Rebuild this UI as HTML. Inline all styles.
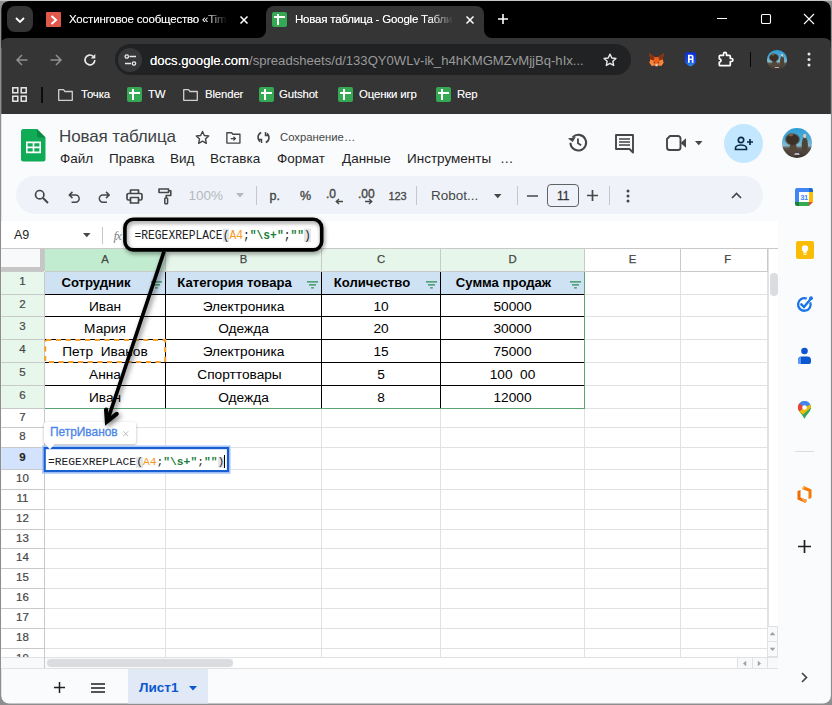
<!DOCTYPE html>
<html lang="ru">
<head>
<meta charset="utf-8">
<title>Новая таблица - Google Таблицы</title>
<style>
*{box-sizing:border-box;margin:0;padding:0}
html,body{width:832px;height:705px;overflow:hidden;background:linear-gradient(#c6c6c6 0 1px,#8e8e8e 1px)}
body{position:relative;font-family:"Liberation Sans",sans-serif;color:#1f1f1f}
#win{position:absolute;left:0;top:0;width:832px;height:705px;clip-path:inset(1px 1.100px 1.400px 1.200px round 8px);background:#f9fbfd}
.abs{position:absolute}
.t{position:absolute;white-space:nowrap;line-height:1;transform:translateY(-50%)}
svg{position:absolute;overflow:visible}
/* ---------- chrome ---------- */
#tabstrip{left:0;top:0;width:832px;height:48px;background:#000}
#chrometb{left:0;top:38px;width:832px;height:76px;background:#353535;border-radius:8px 8px 0 0}
#acttab{left:266px;top:6px;width:218px;height:33px;background:#353535;border-radius:8px 8px 0 0}
#omni{left:115px;top:43.800px;width:516px;height:31.500px;border-radius:16px;background:#212224}
.ct{color:#f2f2f2;font-size:11.5px;letter-spacing:-.2px;text-shadow:0 0 .5px rgba(255,255,255,.7)}
.bm{color:#f2f2f2;font-size:11.4px;letter-spacing:-.15px;text-shadow:0 0 .5px rgba(255,255,255,.7)}
.gic{position:absolute;width:15px;height:15px;border-radius:2px;background:#34a853}
.gic:before{content:"";position:absolute;left:2px;top:4.500px;width:11px;height:2px;background:#fff}
.gic:after{content:"";position:absolute;left:4.500px;top:2px;width:2.500px;height:11px;background:#fff}
/* ---------- sheets ---------- */
.menu{font-size:13.500px;color:#1f1f1f}
.tbtxt{font-size:12px;color:#444746}
.mono{font-family:"Liberation Mono",monospace;font-size:11.300px;color:#202124}
.pb{background:#e3e5e8}
.str{color:#188038;font-weight:bold}
.ch{font-size:11.300px;color:#444746;-webkit-text-stroke:.25px #444746;transform:translate(-50%,-50%)}
.rh{font-size:11.500px;color:#444746;-webkit-text-stroke:.2px #444746;transform:translate(-50%,-50%)}
.cell{font-size:13.700px;color:#000;transform:translate(-50%,-50%)}
</style>
</head>
<body>
<div id="win">
<!-- ======= BROWSER CHROME ======= -->
<div id="tabstrip" class="abs"></div>
<div id="chrometb" class="abs"></div>
<div id="acttab" class="abs"></div>
<!-- tab outward curves -->
<svg style="left:258px;top:30px" width="8" height="8"><path d="M8 0V8H0A8 8 0 0 0 8 0Z" fill="#353535"/></svg>
<svg style="left:484px;top:30px" width="8" height="8"><path d="M0 0V8H8A8 8 0 0 1 0 0Z" fill="#353535"/></svg>
<!-- tab search button -->
<div class="abs" style="left:7px;top:6px;width:26px;height:26px;border-radius:8px;background:#353535"></div>
<svg style="left:15px;top:16.600px" width="10" height="6"><path d="M1 1L5 5L9 1" fill="none" stroke="#fff" stroke-width="1.8"/></svg>
<!-- tab 1 -->
<div class="abs" style="left:46px;top:11.600px;width:15px;height:15px;background:#e0584b;border-radius:1px"></div>
<svg style="left:50px;top:14.600px" width="8" height="10"><path d="M1.5 1L6 5L1.5 9" fill="none" stroke="#fff" stroke-width="2"/></svg>
<span id="tab1" class="t ct" style="left:69px;top:20.200px;width:160px;overflow:hidden;-webkit-mask-image:linear-gradient(90deg,#000 84%,transparent 99%)">Хостинговое сообщество «Timeweb»</span>
<svg style="left:239.500px;top:15.500px" width="8" height="8"><path d="M.5 .5L7.500 7.500M7.500 .5L.5 7.500" stroke="#fff" stroke-width="1.500"/></svg>
<!-- tab 2 -->
<div class="gic" style="left:272px;top:11.500px"></div>
<span id="tab2" class="t ct" style="left:295px;top:20.200px;width:160px;overflow:hidden;color:#fff;-webkit-mask-image:linear-gradient(90deg,#000 84%,transparent 99%)">Новая таблица - Google Таблицы</span>
<svg style="left:465.500px;top:15.500px" width="8" height="8"><path d="M.5 .5L7.500 7.500M7.500 .5L.5 7.500" stroke="#fff" stroke-width="1.500"/></svg>
<!-- new tab + -->
<svg style="left:498px;top:14px" width="10" height="10"><path d="M5 0V10M0 5H10" stroke="#fff" stroke-width="1.6"/></svg>
<!-- window controls -->
<svg style="left:717px;top:18px" width="10" height="1"><path d="M0 .5H10" stroke="#fff" stroke-width="1"/></svg>
<svg style="left:761px;top:14px" width="10" height="10"><rect x=".5" y=".5" width="9" height="9" rx="1.2" fill="none" stroke="#fff" stroke-width="1.1"/></svg>
<svg style="left:804px;top:14px" width="10" height="10"><path d="M0 0L10 10M10 0L0 10" stroke="#fff" stroke-width="1.1"/></svg>
<!-- nav buttons -->
<svg style="left:16px;top:54px" width="12" height="12"><path d="M11.5 6H1.5M6 1L1 6L6 11" fill="none" stroke="#909090" stroke-width="1.5"/></svg>
<svg style="left:50px;top:54px" width="12" height="12"><path d="M.5 6H10.5M6 1L11 6L6 11" fill="none" stroke="#909090" stroke-width="1.5"/></svg>
<svg style="left:83px;top:53px" width="14" height="14"><path d="M11.8 7A4.9 4.9 0 1 1 10.2 3.3" fill="none" stroke="#e8e8e8" stroke-width="1.7"/><path d="M12.3 1V5.6H7.7Z" fill="#e8e8e8"/></svg>
<div id="omni" class="abs"></div>
<div class="abs" style="left:118px;top:48px;width:24px;height:24px;border-radius:12px;background:#37383a"></div>
<svg style="left:124px;top:54px" width="13" height="12"><path d="M5.5 2.5H12M1 9.5H7" stroke="#e8e8e8" stroke-width="1.4"/><circle cx="2.8" cy="2.5" r="1.7" fill="none" stroke="#e8e8e8" stroke-width="1.3"/><circle cx="10" cy="9.5" r="1.7" fill="none" stroke="#e8e8e8" stroke-width="1.3"/></svg>
<span id="url" class="t" style="left:150px;top:60.600px;font-size:13.1px;color:#fff"><span style="text-shadow:0 0 .3px rgba(255,255,255,.8)">docs.google.com</span><span id="url2" style="color:#9a9a9a">/spreadsheets/d/133QY0WLv-ik_h4hKMGMZvMjjBq-hIx...</span></span>
<svg style="left:602px;top:52px" width="16" height="16" viewBox="0 0 24 24"><path d="M12 3.2l2.7 5.7 6.2.8-4.6 4.3 1.2 6.2L12 17.1l-5.5 3.1 1.2-6.2L3.1 9.700l6.2-.8z" fill="none" stroke="#e8e8e8" stroke-width="2.1" stroke-linejoin="round"/></svg>
<!-- extension icons -->
<svg id="fox" style="left:649.200px;top:53px" width="15" height="14" viewBox="0 0 16 14"><path d="M.3 0L6 3.800H10L15.700 0L14.600 6.500L15.500 10L13 13.300L9.800 12.500L9 13.600H7L6.200 12.500L3 13.300L.5 10L1.400 6.500Z" fill="#e85f1c"/><path d="M.3 0L6 3.800L4.800 7.800L1.400 6.500ZM15.700 0L10 3.800L11.200 7.800L14.600 6.500Z" fill="#8e300e"/><path d="M1.400 6.500L4.800 7.800L6.200 12.500L3 13.300L.5 10ZM14.600 6.500L11.200 7.800L9.800 12.500L13 13.300L15.500 10Z" fill="#f5873a"/><path d="M6.600 11H9.400L9 13.600H7Z" fill="#d9d2ca"/><path d="M4.600 9L6.300 9.600L5.900 10.600ZM11.400 9L9.700 9.600L10.100 10.600Z" fill="#2b1a12"/></svg>
<svg style="left:685.400px;top:52.300px" width="11" height="14.600" viewBox="0 0 11 14.500"><defs><linearGradient id="shg" x1="0" y1="0" x2="0" y2="1"><stop offset="0" stop-color="#0a2fd6"/><stop offset=".6" stop-color="#1247e6"/><stop offset="1" stop-color="#2a9cf2"/></linearGradient></defs><path d="M0 .8L5.500 0L11 .8V9C11 11.500 7.500 13.500 5.500 14.500C3.500 13.500 0 11.500 0 9Z" fill="url(#shg)"/><path d="M3 2.600H6.600A1.900 1.900 0 0 1 8.500 4.500V10.600H6.800V8H4.700V10.600H3ZM4.700 4.100V6.400H6.800V4.500A.4.400 0 0 0 6.400 4.100Z" fill="#fff" fill-rule="evenodd"/></svg>
<svg style="left:716px;top:50px" width="20" height="18" viewBox="0 0 20 18"><path d="M4.300 5.300H7.500V3.900A1.500 1.500 0 1 1 10.500 3.900V5.300H13.300A1 1 0 0 1 14.300 6.300V8.500H15.400A1.500 1.500 0 1 1 15.400 11.500H14.300V14.700A1 1 0 0 1 13.300 15.700H4.300A1 1 0 0 1 3.300 14.700V12.200A1.700 1.700 0 1 0 3.300 8.800V6.300A1 1 0 0 1 4.300 5.300Z" fill="none" stroke="#fff" stroke-width="1.700" stroke-linejoin="round"/></svg>
<div class="abs" style="left:749.500px;top:52px;width:1.500px;height:15px;background:#060606"></div>
<div id="av1" class="abs" style="left:767px;top:50px;width:19.500px;height:19.500px;border-radius:50%;background:radial-gradient(ellipse 10% 4% at 50% 87%,#aab6c8 0 80%,transparent 100%),radial-gradient(ellipse 6% 8% at 76% 26%,#cfc8b8 0 80%,transparent 100%),radial-gradient(ellipse 8% 7% at 30% 22%,#7a6244 0 70%,transparent 100%),radial-gradient(ellipse 27% 22% at 35% 38%,#3c2f25 0 72%,transparent 100%),radial-gradient(ellipse 14% 28% at 37% 70%,#55463a 0 72%,transparent 100%),radial-gradient(ellipse 12% 32% at 76% 58%,#4d4438 0 72%,transparent 100%),linear-gradient(#2e9ed6 0,#4aa9d6 32%,#86b9cf 58%,#5a5148 68%,#3a302a 100%)"></div>
<svg style="left:807px;top:52px" width="4" height="15"><circle cx="2" cy="2" r="1.500" fill="#e8e8e8"/><circle cx="2" cy="7.500" r="1.500" fill="#e8e8e8"/><circle cx="2" cy="13" r="1.500" fill="#e8e8e8"/></svg>
<!-- bookmarks bar -->
<svg style="left:12px;top:87px" width="15" height="15"><g fill="none" stroke="#e8e8e8" stroke-width="1.500"><rect x=".8" y=".8" width="5" height="5"/><rect x="9.200" y=".8" width="5" height="5"/><rect x=".8" y="9.200" width="5" height="5"/><rect x="9.200" y="9.200" width="5" height="5"/></g></svg>
<div class="abs" style="left:41px;top:87px;width:2px;height:16px;background:#0c0c0c"></div>
<svg class="fold" style="left:58px;top:89px" width="15" height="12"><path d="M.7.700H5.500L7 2.500H14.300V11.300H.7Z" fill="none" stroke="#d0d0d0" stroke-width="1.300" stroke-linejoin="round"/></svg>
<span id="bm1" class="t bm" style="left:81px;top:95px">Точка</span>
<div class="gic" style="left:127px;top:87px"></div>
<span id="bm2" class="t bm" style="left:148px;top:95px">TW</span>
<svg class="fold" style="left:183px;top:89px" width="15" height="12"><path d="M.7.700H5.500L7 2.500H14.300V11.300H.7Z" fill="none" stroke="#d0d0d0" stroke-width="1.300" stroke-linejoin="round"/></svg>
<span id="bm3" class="t bm" style="left:205px;top:95px">Blender</span>
<div class="gic" style="left:259px;top:87px"></div>
<span id="bm4" class="t bm" style="left:279px;top:95px">Gutshot</span>
<div class="gic" style="left:338px;top:87px"></div>
<span id="bm5" class="t bm" style="left:359px;top:95px">Оценки игр</span>
<div class="gic" style="left:436px;top:87px"></div>
<span id="bm6" class="t bm" style="left:457px;top:95px">Rep</span>
<!-- ======= SHEETS APP ======= -->

<!-- doc header -->
<svg style="left:21px;top:129.400px" width="24.500" height="32.500" viewBox="0 0 24.500 32.500"><path d="M2.500 0H16L24.500 8.500V30A2.500 2.500 0 0 1 22 32.500H2.500A2.500 2.500 0 0 1 0 30V2.500A2.500 2.500 0 0 1 2.500 0Z" fill="#10ab57"/><path d="M16 0L24.500 8.500H18A2 2 0 0 1 16 6.500Z" fill="#0b8a45"/><path d="M5 12.600H20V24.200H5ZM6.600 14.200V17.600H11.700V14.200ZM13.300 14.200V17.600H18.400V14.200ZM6.600 19.200V22.600H11.700V19.200ZM13.300 19.200V22.600H18.400V19.200Z" fill="#fff" fill-rule="evenodd"/></svg>
<span id="title" class="t" style="left:59px;top:136.200px;font-size:17px;letter-spacing:-.13px;color:#3f4245">Новая таблица</span>
<svg style="left:194px;top:129px" width="17" height="17" viewBox="0 0 24 24"><path d="M12 3.500l2.600 5.600 6.100.8-4.500 4.200 1.200 6.100L12 17.200l-5.400 3 1.200-6.100-4.500-4.200 6.100-.8z" fill="none" stroke="#444746" stroke-width="2" stroke-linejoin="round"/></svg>
<svg style="left:225.500px;top:131.500px" width="14.800" height="11.800" viewBox="0 0 16 13"><path d="M.8.800H6L7.500 2.500H15.200V12.200H.8Z" fill="none" stroke="#444746" stroke-width="1.500" stroke-linejoin="round"/><path d="M5 7.300H9.500M8 5.300L10.200 7.300L8 9.300" fill="none" stroke="#444746" stroke-width="1.400"/></svg>
<svg style="left:257px;top:131px" width="13" height="13" viewBox="0 0 13 13"><path d="M4.200 1.500A5.200 5.200 0 0 0 3.200 10.500M8.800 11.500A5.200 5.200 0 0 0 9.800 2.500" fill="none" stroke="#444746" stroke-width="1.600"/><path d="M1 8.500H4.500V12M12 4.500H8.500V1" fill="none" stroke="#444746" stroke-width="1.500"/></svg>
<span id="saving" class="t" style="left:280px;top:137.500px;font-size:11.300px;color:#444746">Сохранение…</span>
<span id="m1" class="t menu" style="left:60px;top:158.500px">Файл</span>
<span id="m2" class="t menu" style="left:109px;top:158.500px">Правка</span>
<span id="m3" class="t menu" style="left:170px;top:158.500px">Вид</span>
<span id="m4" class="t menu" style="left:210px;top:158.500px">Вставка</span>
<span id="m5" class="t menu" style="left:277px;top:158.500px">Формат</span>
<span id="m6" class="t menu" style="left:342px;top:158.500px">Данные</span>
<span id="m7" class="t menu" style="left:407px;top:158.500px">Инструменты</span>
<span id="m8" class="t menu" style="left:500px;top:158.500px">…</span>
<!-- right header icons -->
<svg style="left:566.500px;top:132.200px" width="21.500" height="21.500" viewBox="0 0 20 20"><path d="M3.200 10A7.300 7.300 0 1 0 5.300 4.800" fill="none" stroke="#444746" stroke-width="1.900"/><path d="M1 5.500L5 9.500L8.500 5.200Z" fill="#444746" transform="rotate(-8 4 7)"/><path d="M10.200 6V10.500L13.200 12.300" fill="none" stroke="#444746" stroke-width="1.700"/></svg>
<svg style="left:615px;top:134px" width="19" height="19" viewBox="0 0 19 19"><path d="M1 1H18V18.500L14.500 15H1Z" fill="none" stroke="#444746" stroke-width="1.900" stroke-linejoin="round"/><path d="M4 5H15M4 8H15M4 11H15" stroke="#444746" stroke-width="1.500"/></svg>
<svg style="left:666px;top:135px" width="21" height="16" viewBox="0 0 21 16"><path d="M4 1H12A2.500 2.500 0 0 1 14.500 3.500V12.500A2.500 2.500 0 0 1 12 15H3.500A2.500 2.500 0 0 1 1 12.500V4Z" fill="none" stroke="#444746" stroke-width="1.900" stroke-linejoin="round"/><path d="M14.500 8L20 3.200V12.800Z" fill="#444746"/></svg>
<svg style="left:695px;top:141px" width="7.500" height="4.500"><path d="M0 0H7.500L3.750 4.200Z" fill="#444746"/></svg>
<div class="abs" style="left:724px;top:124px;width:39px;height:39px;border-radius:50%;background:#c2e7ff"></div>
<svg style="left:734px;top:136px" width="20" height="15" viewBox="0 0 20 15"><circle cx="7" cy="4" r="2.700" fill="none" stroke="#0a2a4a" stroke-width="1.700"/><path d="M1.500 13.500V12C1.500 9.800 5 9 7 9S12.500 9.800 12.500 12V13.500Z" fill="none" stroke="#0a2a4a" stroke-width="1.700" stroke-linejoin="round"/><path d="M16 3V9M13 6H19" stroke="#0a2a4a" stroke-width="1.700"/></svg>
<div id="av2" class="abs" style="left:782px;top:127.600px;width:30.400px;height:30.400px;border-radius:50%;background:radial-gradient(ellipse 10% 4% at 50% 87%,#aab6c8 0 80%,transparent 100%),radial-gradient(ellipse 6% 8% at 76% 26%,#cfc8b8 0 80%,transparent 100%),radial-gradient(ellipse 8% 7% at 30% 22%,#7a6244 0 70%,transparent 100%),radial-gradient(ellipse 27% 22% at 35% 38%,#3c2f25 0 72%,transparent 100%),radial-gradient(ellipse 14% 28% at 37% 70%,#55463a 0 72%,transparent 100%),radial-gradient(ellipse 12% 32% at 76% 58%,#4d4438 0 72%,transparent 100%),linear-gradient(#2e9ed6 0,#4aa9d6 32%,#86b9cf 58%,#5a5148 68%,#3a302a 100%)"></div>
<!-- toolbar pill -->
<div class="abs" style="left:16px;top:176px;width:747px;height:38px;border-radius:19px;background:#eff3f9"></div>
<svg style="left:34px;top:188.700px" width="15" height="15" viewBox="0 0 15 15"><circle cx="5.700" cy="5.700" r="4.200" fill="none" stroke="#444746" stroke-width="1.700"/><path d="M9 9L14 14" stroke="#444746" stroke-width="1.900"/></svg>
<svg style="left:68px;top:190.700px" width="12.500" height="12.500" viewBox="0 0 14 14"><path d="M5 1L1.500 4.500L5 8M1.500 4.500H8.500A4 4 0 0 1 8.500 12.500H4" fill="none" stroke="#444746" stroke-width="1.700"/></svg>
<svg style="left:98px;top:190.700px" width="12.500" height="12.500" viewBox="0 0 14 14"><path d="M9 1L12.500 4.500L9 8M12.500 4.500H5.500A4 4 0 0 0 5.500 12.500H10" fill="none" stroke="#444746" stroke-width="1.700"/></svg>
<svg style="left:126px;top:188.700px" width="17" height="15" viewBox="0 0 17 15"><path d="M4.500 4.500V1H12.500V4.500M4.500 11H2.500A1.500 1.500 0 0 1 1 9.500V6A1.500 1.500 0 0 1 2.500 4.500H14.500A1.500 1.500 0 0 1 16 6V9.500A1.500 1.500 0 0 1 14.500 11H12.500M4.500 8.500H12.500V14H4.500Z" fill="none" stroke="#444746" stroke-width="1.700" stroke-linejoin="round"/></svg>
<svg style="left:157.500px;top:188px" width="14" height="17" viewBox="0 0 14 17"><path d="M1 1H10.500V4.500H1ZM10.500 2.800H12.800V7.500H8.200V10" fill="none" stroke="#444746" stroke-width="1.600" stroke-linejoin="round"/><rect x="6.800" y="10" width="2.800" height="5.800" rx=".8" fill="none" stroke="#444746" stroke-width="1.500"/></svg>
<span id="zoom" class="t" style="left:188.500px;top:196px;font-size:13.500px;color:#b4b8bd">100%</span>
<svg style="left:236px;top:193px" width="8" height="5"><path d="M0 0H8L4 4.500Z" fill="#b4b8bd"/></svg>
<div class="abs" style="left:256px;top:186px;width:1px;height:19px;background:#c7c7c7"></div>
<span id="cur" class="t tbtxt" style="left:269.500px;top:196px;font-size:12.500px;-webkit-text-stroke:.35px #444746">р.</span>
<span id="pct" class="t tbtxt" style="left:300px;top:196px;font-size:12.500px;-webkit-text-stroke:.35px #444746">%</span>
<span id="dec0" class="t tbtxt" style="left:326px;top:194px;font-size:12px;-webkit-text-stroke:.4px #444746">.0</span>
<svg style="left:335px;top:198px" width="8" height="7"><path d="M8 3.500H1.500M4 1L1.200 3.500L4 6" fill="none" stroke="#444746" stroke-width="1.300"/></svg>
<span id="dec00" class="t tbtxt" style="left:358px;top:194px;font-size:12px;-webkit-text-stroke:.4px #444746">.00</span>
<svg style="left:365px;top:198px" width="8" height="7"><path d="M0 3.500H6.500M4 1L6.800 3.500L4 6" fill="none" stroke="#444746" stroke-width="1.300"/></svg>
<span id="n123" class="t tbtxt" style="left:388.500px;top:196px;font-size:11px;-webkit-text-stroke:.3px #444746;letter-spacing:-.1px">123</span>
<div class="abs" style="left:416px;top:186px;width:1px;height:19px;background:#c7c7c7"></div>
<span id="font" class="t tbtxt" style="left:431px;top:196px;font-size:13.500px">Robot...</span>
<svg style="left:494.200px;top:193.500px" width="7.500" height="4.500"><path d="M0 0H7.500L3.750 4.200Z" fill="#444746"/></svg>
<div class="abs" style="left:517px;top:186px;width:1px;height:19px;background:#c7c7c7"></div>
<svg style="left:527px;top:195px" width="11" height="2"><path d="M0 1H11" stroke="#444746" stroke-width="1.700"/></svg>
<div class="abs" style="left:547px;top:184px;width:32px;height:23px;border:1px solid #5f6368;border-radius:4px"></div>
<span id="fs" class="t tbtxt" style="left:557px;top:196px;font-size:12px;-webkit-text-stroke:.3px #333;color:#333">11</span>
<svg style="left:587px;top:190px" width="11" height="11"><path d="M5.500 0V11M0 5.500H11" stroke="#444746" stroke-width="1.700"/></svg>
<div class="abs" style="left:609px;top:186px;width:1px;height:19px;background:#c7c7c7"></div>
<svg style="left:626px;top:189px" width="4" height="14"><circle cx="2" cy="2" r="1.500" fill="#444746"/><circle cx="2" cy="7" r="1.500" fill="#444746"/><circle cx="2" cy="12" r="1.500" fill="#444746"/></svg>
<svg style="left:731px;top:192px" width="11" height="7"><path d="M1 6L5.500 1.500L10 6" fill="none" stroke="#444746" stroke-width="1.700"/></svg>
<!-- formula bar -->
<div class="abs" style="left:1px;top:221px;width:777px;height:28px;background:#fff"></div>
<span id="cellref" class="t" style="left:14px;top:235px;font-size:12.500px;color:#1f1f1f">A9</span>
<svg style="left:82.500px;top:233px" width="7.500" height="4.500"><path d="M0 0H7.500L3.750 4.200Z" fill="#444746"/></svg>
<div class="abs" style="left:102px;top:227px;width:1px;height:17px;background:#c7c7c7"></div>
<span class="t" style="left:113.500px;top:235px;font-size:13px;font-style:italic;font-family:'Liberation Serif',serif;color:#80868b;letter-spacing:-1px">fx</span>
<!--GRID-START-->
<div class="abs" style="left:1px;top:248px;width:777px;height:421px;background:#fff"></div>
<div class="abs" style="left:1px;top:248px;width:777px;height:1px;background:#c9c9c9"></div>
<div class="abs" style="left:1px;top:249px;width:39px;height:18px;background:#f8f9fa"></div>
<div class="abs" style="left:40px;top:249px;width:4px;height:23px;background:#c6c6c6"></div>
<div class="abs" style="left:1px;top:267px;width:43px;height:5px;background:#c6c6c6"></div>
<div class="abs" style="left:45px;top:249px;width:120px;height:22px;background:#c2ecd0"></div>
<div class="abs" style="left:166px;top:249px;width:418px;height:22px;background:#e6f6ea"></div>
<div class="abs" style="left:1px;top:272px;width:43px;height:136px;background:#e8f7ec"></div>
<div class="abs" style="left:1px;top:448px;width:43px;height:21px;background:#d3e3fd"></div>
<div class="abs" style="left:45px;top:272px;width:539px;height:22px;background:#cfe2f3"></div>
<div class="abs" style="left:1px;top:271px;width:43px;height:1px;background:#c9c9c9"></div>
<div class="abs" style="left:45px;top:271px;width:723px;height:1px;background:#c9c9c9"></div>
<div class="abs" style="left:1px;top:294px;width:43px;height:1px;background:#c9c9c9"></div>
<div class="abs" style="left:45px;top:294px;width:723px;height:1px;background:#e1e1e1"></div>
<div class="abs" style="left:1px;top:316px;width:43px;height:1px;background:#c9c9c9"></div>
<div class="abs" style="left:45px;top:316px;width:723px;height:1px;background:#e1e1e1"></div>
<div class="abs" style="left:1px;top:339px;width:43px;height:1px;background:#c9c9c9"></div>
<div class="abs" style="left:45px;top:339px;width:723px;height:1px;background:#e1e1e1"></div>
<div class="abs" style="left:1px;top:362px;width:43px;height:1px;background:#c9c9c9"></div>
<div class="abs" style="left:45px;top:362px;width:723px;height:1px;background:#e1e1e1"></div>
<div class="abs" style="left:1px;top:385px;width:43px;height:1px;background:#c9c9c9"></div>
<div class="abs" style="left:45px;top:385px;width:723px;height:1px;background:#e1e1e1"></div>
<div class="abs" style="left:1px;top:408px;width:43px;height:1px;background:#c9c9c9"></div>
<div class="abs" style="left:45px;top:408px;width:723px;height:1px;background:#e1e1e1"></div>
<div class="abs" style="left:1px;top:427px;width:43px;height:1px;background:#c9c9c9"></div>
<div class="abs" style="left:45px;top:427px;width:723px;height:1px;background:#e1e1e1"></div>
<div class="abs" style="left:1px;top:447px;width:43px;height:1px;background:#c9c9c9"></div>
<div class="abs" style="left:45px;top:447px;width:723px;height:1px;background:#e1e1e1"></div>
<div class="abs" style="left:1px;top:469px;width:43px;height:1px;background:#c9c9c9"></div>
<div class="abs" style="left:45px;top:469px;width:723px;height:1px;background:#e1e1e1"></div>
<div class="abs" style="left:1px;top:489px;width:43px;height:1px;background:#c9c9c9"></div>
<div class="abs" style="left:45px;top:489px;width:723px;height:1px;background:#e1e1e1"></div>
<div class="abs" style="left:1px;top:509px;width:43px;height:1px;background:#c9c9c9"></div>
<div class="abs" style="left:45px;top:509px;width:723px;height:1px;background:#e1e1e1"></div>
<div class="abs" style="left:1px;top:529px;width:43px;height:1px;background:#c9c9c9"></div>
<div class="abs" style="left:45px;top:529px;width:723px;height:1px;background:#e1e1e1"></div>
<div class="abs" style="left:1px;top:548px;width:43px;height:1px;background:#c9c9c9"></div>
<div class="abs" style="left:45px;top:548px;width:723px;height:1px;background:#e1e1e1"></div>
<div class="abs" style="left:1px;top:568px;width:43px;height:1px;background:#c9c9c9"></div>
<div class="abs" style="left:45px;top:568px;width:723px;height:1px;background:#e1e1e1"></div>
<div class="abs" style="left:1px;top:588px;width:43px;height:1px;background:#c9c9c9"></div>
<div class="abs" style="left:45px;top:588px;width:723px;height:1px;background:#e1e1e1"></div>
<div class="abs" style="left:1px;top:608px;width:43px;height:1px;background:#c9c9c9"></div>
<div class="abs" style="left:45px;top:608px;width:723px;height:1px;background:#e1e1e1"></div>
<div class="abs" style="left:1px;top:628px;width:43px;height:1px;background:#c9c9c9"></div>
<div class="abs" style="left:45px;top:628px;width:723px;height:1px;background:#e1e1e1"></div>
<div class="abs" style="left:1px;top:648px;width:43px;height:1px;background:#c9c9c9"></div>
<div class="abs" style="left:45px;top:648px;width:723px;height:1px;background:#e1e1e1"></div>
<div class="abs" style="left:44px;top:249px;width:1px;height:22px;background:#c9c9c9"></div>
<div class="abs" style="left:44px;top:272px;width:1px;height:385px;background:#c9c9c9"></div>
<div class="abs" style="left:165px;top:249px;width:1px;height:22px;background:#c9c9c9"></div>
<div class="abs" style="left:165px;top:272px;width:1px;height:385px;background:#e1e1e1"></div>
<div class="abs" style="left:321px;top:249px;width:1px;height:22px;background:#c9c9c9"></div>
<div class="abs" style="left:321px;top:272px;width:1px;height:385px;background:#e1e1e1"></div>
<div class="abs" style="left:440px;top:249px;width:1px;height:22px;background:#c9c9c9"></div>
<div class="abs" style="left:440px;top:272px;width:1px;height:385px;background:#e1e1e1"></div>
<div class="abs" style="left:584px;top:249px;width:1px;height:22px;background:#c9c9c9"></div>
<div class="abs" style="left:584px;top:272px;width:1px;height:385px;background:#e1e1e1"></div>
<div class="abs" style="left:680px;top:249px;width:1px;height:22px;background:#c9c9c9"></div>
<div class="abs" style="left:680px;top:272px;width:1px;height:385px;background:#e1e1e1"></div>
<div class="abs" style="left:767px;top:249px;width:1px;height:22px;background:#c9c9c9"></div>
<div class="abs" style="left:767px;top:272px;width:1px;height:385px;background:#e1e1e1"></div>
<div class="abs" style="left:45px;top:294px;width:540px;height:1px;background:#000"></div>
<div class="abs" style="left:45px;top:316px;width:540px;height:1px;background:#000"></div>
<div class="abs" style="left:45px;top:339px;width:540px;height:1px;background:#000"></div>
<div class="abs" style="left:45px;top:362px;width:540px;height:1px;background:#000"></div>
<div class="abs" style="left:45px;top:385px;width:540px;height:1px;background:#000"></div>
<div class="abs" style="left:165px;top:272px;width:1px;height:136px;background:#000"></div>
<div class="abs" style="left:321px;top:272px;width:1px;height:136px;background:#000"></div>
<div class="abs" style="left:440px;top:272px;width:1px;height:136px;background:#000"></div>
<div class="abs" style="left:584px;top:272px;width:1px;height:137px;background:#5aa575"></div>
<div class="abs" style="left:45px;top:408px;width:540px;height:1px;background:#5aa575"></div>
<span class="t ch" style="left:105.0px;top:260px">A</span>
<span class="t ch" style="left:243.5px;top:260px">B</span>
<span class="t ch" style="left:381.0px;top:260px">C</span>
<span class="t ch" style="left:512.5px;top:260px">D</span>
<span class="t ch" style="left:632.5px;top:260px">E</span>
<span class="t ch" style="left:727.8px;top:260px">F</span>
<span class="t rh" style="left:22.500px;top:282.4px">1</span>
<span class="t rh" style="left:22.500px;top:304.9px">2</span>
<span class="t rh" style="left:22.500px;top:327.4px">3</span>
<span class="t rh" style="left:22.500px;top:350.4px">4</span>
<span class="t rh" style="left:22.500px;top:373.4px">5</span>
<span class="t rh" style="left:22.500px;top:396.4px">6</span>
<span class="t rh" style="left:22.500px;top:417.7px">7</span>
<span class="t rh" style="left:22.500px;top:437.2px">8</span>
<span class="t rh" style="left:22.500px;top:458.2px;font-weight:bold;color:#1f1f1f">9</span>
<span class="t rh" style="left:22.500px;top:479.2px">10</span>
<span class="t rh" style="left:22.500px;top:499.2px">11</span>
<span class="t rh" style="left:22.500px;top:519.2px">12</span>
<span class="t rh" style="left:22.500px;top:538.7px">13</span>
<span class="t rh" style="left:22.500px;top:558.2px">14</span>
<span class="t rh" style="left:22.500px;top:578.2px">15</span>
<span class="t rh" style="left:22.500px;top:598.2px">16</span>
<span class="t rh" style="left:22.500px;top:618.2px">17</span>
<span class="t rh" style="left:22.500px;top:638.2px">18</span>
<span class="t rh" style="left:22.500px;top:659px;clip-path:inset(0 0 5.500px 0)">19</span>
<span id="h0" class="t cell" style="left:96px;top:283.300px;font-weight:bold;font-size:13.100px;color:#000">Сотрудник</span>
<svg style="left:150.5px;top:281px" width="11" height="8"><path d="M0 .8H11M2 3.800H9M4.200 6.800H6.800" stroke="#2d8a52" stroke-width="1.200"/></svg>
<span id="h1" class="t cell" style="left:234.5px;top:283.300px;font-weight:bold;font-size:13.100px;color:#000">Категория товара</span>
<svg style="left:306.5px;top:281px" width="11" height="8"><path d="M0 .8H11M2 3.800H9M4.200 6.800H6.800" stroke="#2d8a52" stroke-width="1.200"/></svg>
<span id="h2" class="t cell" style="left:372px;top:283.300px;font-weight:bold;font-size:13.100px;color:#000">Количество</span>
<svg style="left:425.5px;top:281px" width="11" height="8"><path d="M0 .8H11M2 3.800H9M4.200 6.800H6.800" stroke="#2d8a52" stroke-width="1.200"/></svg>
<span id="h3" class="t cell" style="left:503.5px;top:283.300px;font-weight:bold;font-size:13.100px;color:#000">Сумма продаж</span>
<svg style="left:569.5px;top:281px" width="11" height="8"><path d="M0 .8H11M2 3.800H9M4.200 6.800H6.800" stroke="#2d8a52" stroke-width="1.200"/></svg>
<span id="d00" class="t cell" style="left:105.0px;top:306.5px">Иван</span>
<span id="d01" class="t cell" style="left:243.5px;top:306.5px">Электроника</span>
<span id="d02" class="t cell" style="left:381.0px;top:306.5px">10</span>
<span id="d03" class="t cell" style="left:512.5px;top:306.5px">50000</span>
<span id="d10" class="t cell" style="left:105.0px;top:329.0px">Мария</span>
<span id="d11" class="t cell" style="left:243.5px;top:329.0px">Одежда</span>
<span id="d12" class="t cell" style="left:381.0px;top:329.0px">20</span>
<span id="d13" class="t cell" style="left:512.5px;top:329.0px">30000</span>
<span id="d20" class="t cell" style="left:105.0px;top:351.5px">Петр  Иванов</span>
<span id="d21" class="t cell" style="left:243.5px;top:351.5px">Электроника</span>
<span id="d22" class="t cell" style="left:381.0px;top:351.5px">15</span>
<span id="d23" class="t cell" style="left:512.5px;top:351.5px">75000</span>
<span id="d30" class="t cell" style="left:105.0px;top:374.5px">Анна</span>
<span id="d31" class="t cell" style="left:239.5px;top:374.5px">Спорттовары</span>
<span id="d32" class="t cell" style="left:381.0px;top:374.5px">5</span>
<span id="d33" class="t cell" style="left:512.5px;top:374.5px">100  00</span>
<span id="d40" class="t cell" style="left:105.0px;top:397.5px">Иван</span>
<span id="d41" class="t cell" style="left:243.5px;top:397.5px">Одежда</span>
<span id="d42" class="t cell" style="left:381.0px;top:397.5px">8</span>
<span id="d43" class="t cell" style="left:512.5px;top:397.5px">12000</span>
<svg style="left:0;top:0" width="200" height="400"><rect x="45.200" y="340" width="120" height="22" fill="none" stroke="#f6a02c" stroke-width="2.100" stroke-dasharray="5.200 4.500" stroke-dashoffset="-1"/></svg>
<div class="abs" style="left:768px;top:249px;width:10px;height:408px;background:#fff;border-left:1px solid #e1e1e1"></div>
<div class="abs" style="left:770px;top:273px;width:8px;height:23px;border-radius:4px;background:#dadce0"></div>
<div class="abs" style="left:767px;top:626px;width:11px;height:31px;background:#f8f9fa;border:1px solid #e1e1e1"></div>
<div class="abs" style="left:767px;top:641px;width:11px;height:1px;background:#e1e1e1"></div>
<svg style="left:769px;top:631px" width="7" height="5"><path d="M.7 4.200H6.300L3.500 1Z" fill="#9aa0a6"/></svg>
<svg style="left:769px;top:647px" width="7" height="5"><path d="M.7 .8H6.300L3.500 4Z" fill="#9aa0a6"/></svg>
<div class="abs" style="left:1px;top:657px;width:777px;height:12px;background:#f8f9fa;border-top:1px solid #e1e1e1"></div>
<div class="abs" style="left:44px;top:657px;width:1px;height:12px;background:#c9c9c9"></div>
<div class="abs" style="left:47px;top:659px;width:186px;height:8px;border-radius:4px;background:#dadce0"></div>
<div class="abs" style="left:233px;top:658px;width:504px;height:11px;background:#fff"></div>
<div class="abs" style="left:737px;top:657px;width:31px;height:12px;background:#f8f9fa;border:1px solid #e1e1e1;border-bottom:0"></div>
<div class="abs" style="left:752px;top:657px;width:1px;height:12px;background:#e1e1e1"></div>
<svg style="left:742px;top:660px" width="5" height="7"><path d="M4.200 .7V6.300L1 3.500Z" fill="#9aa0a6"/></svg>
<svg style="left:757px;top:660px" width="5" height="7"><path d="M.8 .7V6.300L4 3.500Z" fill="#9aa0a6"/></svg>
<div class="abs" style="left:1px;top:668px;width:777px;height:1px;background:#e1e1e1"></div>
<!--GRID-END-->

<!-- side panel icons -->
<svg style="left:795px;top:188px" width="18" height="18" viewBox="0 0 18 18"><rect x="0" y="0" width="18" height="18" rx="2" fill="#fff"/><path d="M0 2A2 2 0 0 1 2 0H14V4H4V14H0Z" fill="#4285f4"/><path d="M14 0H16A2 2 0 0 1 18 2V4H14Z" fill="#1967d2"/><path d="M14 4H18V14H14Z" fill="#fbbc04"/><path d="M4 14H14V18H4Z" fill="#34a853"/><path d="M0 14H4V18H2A2 2 0 0 1 0 16Z" fill="#188038"/><path d="M14 14H18L14 18Z" fill="#ea4335"/><text x="9" y="12.200" font-family="Liberation Sans,sans-serif" font-size="7.500" font-weight="bold" fill="#4285f4" text-anchor="middle" letter-spacing="-.3">31</text></svg>
<svg style="left:795.500px;top:241px" width="18" height="18" viewBox="0 0 18 18"><rect width="18" height="18" rx="2" fill="#fbbc04"/><circle cx="9" cy="7.500" r="3.200" fill="#fff"/><rect x="7.300" y="10" width="3.400" height="1.800" fill="#fff"/><rect x="7.300" y="12.600" width="3.400" height="1.200" fill="#fff"/></svg>
<svg style="left:796px;top:295px" width="18" height="18" viewBox="0 0 18 18"><path d="M14.300 7.300A6.300 6.300 0 1 1 10.700 3.600" fill="none" stroke="#1a73e8" stroke-width="2.300"/><path d="M5.300 9.300L8 12L15.300 3.300" fill="none" stroke="#1a73e8" stroke-width="2.400" stroke-linecap="round"/><circle cx="15" cy="3.200" r="1.900" fill="#1a73e8"/></svg>
<svg style="left:797px;top:347px" width="15" height="18" viewBox="0 0 15 18"><circle cx="7.500" cy="4" r="3.300" fill="#0b57d0"/><path d="M1 13A3.500 3.500 0 0 1 4.500 9.500H10.500A3.500 3.500 0 0 1 14 13V15A2 2 0 0 1 12 17H3A2 2 0 0 1 1 15Z" fill="#0b57d0"/><path d="M1 13.500A3.500 3.500 0 0 1 4 10V17H3A2 2 0 0 1 1 15Z" fill="#5e97f6"/></svg>
<svg style="left:798px;top:401px" width="13" height="18" viewBox="0 0 13 18"><path d="M6.500 0A6.500 6.500 0 0 1 13 6.500C13 10.500 8.500 13 6.500 18C4.500 13 0 10.500 0 6.500A6.500 6.500 0 0 1 6.500 0Z" fill="#34a853"/><path d="M6.500 0A6.500 6.500 0 0 1 12.300 3.500L6.500 6.500L1.500 2.300A6.500 6.500 0 0 1 6.500 0Z" fill="#4285f4"/><path d="M1.500 2.300L6.500 6.500L1.300 10.500A6.500 6.500 0 0 1 1.500 2.300Z" fill="#ea4335"/><path d="M1.300 10.500L6.500 6.500L12.300 3.500A6.500 6.500 0 0 1 13 6.500L5 13.500C3.500 12 2 11.500 1.300 10.500Z" fill="#fbbc04" opacity=".95"/><circle cx="6.500" cy="6.500" r="2.300" fill="#fff"/></svg>
<div class="abs" style="left:795px;top:451px;width:19px;height:1px;background:#dadce0"></div>
<svg style="left:797px;top:486px" width="15" height="17" viewBox="0 0 15 17"><path d="M6.500 0L14.500 3.500V12L11.500 13V5.500L5 3Z" fill="#f57c00"/><path d="M6.500 0L8 .8L6.500 3.600L5 3Z" fill="#ffb74d"/><path d="M0.500 5L3.500 4V11.500L10 14L8.500 17L0.500 13.500Z" fill="#ef6c00"/><path d="M3.500 11.500L10 14L8.500 17L7.200 16.400Z" fill="#ffa040"/></svg>
<svg style="left:798px;top:540px" width="13" height="13"><path d="M6.500 0V13M0 6.500H13" stroke="#1f1f1f" stroke-width="1.700"/></svg>
<svg style="left:801px;top:672px" width="7" height="11"><path d="M1 1L5.500 5.500L1 10" fill="none" stroke="#444746" stroke-width="1.700"/></svg>
<!-- bottom bar -->
<svg style="left:54px;top:682px" width="11" height="11"><path d="M5.500 0V11M0 5.500H11" stroke="#1f1f1f" stroke-width="1.500"/></svg>
<svg style="left:91px;top:683px" width="14" height="10"><path d="M0 1H14M0 5H14M0 9H14" stroke="#1f1f1f" stroke-width="1.500"/></svg>
<div class="abs" style="left:128px;top:669px;width:80px;height:35px;background:#e1e9f7"></div>
<span id="sheet" class="t" style="left:139px;top:688px;font-size:13.500px;font-weight:bold;color:#0b57d0">Лист1</span>
<svg style="left:189px;top:686px" width="8" height="5"><path d="M0 0H8L4 4.500Z" fill="#0b57d0"/></svg>

<!-- formula text in bar -->
<span id="f1" class="t mono" style="left:134.500px;top:236.100px;transform:translateY(-50%) scaleY(1.12)">=REGEXREPLACE<span class="pb">(</span><span style="color:#f7981d">A4</span>;<span class="str">"\s+"</span>;<span class="str">""</span><span class="pb">)</span></span>
<!-- black callout box -->
<svg style="left:0;top:0;filter:drop-shadow(1px 2px 2px rgba(0,0,0,.45))" width="832" height="300"><rect x="124.900" y="219.300" width="196.800" height="30.600" rx="8.500" fill="none" stroke="#000" stroke-width="3.600"/></svg>
<!-- tooltip -->
<div class="abs" style="left:44px;top:421.500px;width:92px;height:22px;background:#fff;border-radius:2px;box-shadow:0 1px 3px rgba(0,0,0,.3)"></div>
<span id="tip" class="t" style="left:50px;top:432.500px;font-size:11.900px;color:#4a86e8;-webkit-text-stroke:.3px #4a86e8">ПетрИванов</span>
<svg style="left:122.500px;top:430.500px" width="5.500" height="5.500"><path d="M.3 .3L5.200 5.200M5.200 .3L.3 5.200" stroke="#b4b4b4" stroke-width=".9"/></svg>
<!-- cell editor -->
<svg style="left:0;top:0" width="300" height="480"><rect x="42.800" y="446.200" width="187" height="26.800" fill="none" stroke="#a8c7fa" stroke-width="1.500"/><rect x="44.700" y="448.100" width="183.300" height="23" fill="#fff" stroke="#1a5fd0" stroke-width="2.200"/></svg>
<span id="f2" class="t mono" style="left:48px;top:463px;transform:translateY(-50%) scaleY(.92)">=REGEXREPLACE<span class="pb">(</span><span style="color:#f7981d">A4</span>;<span class="str">"\s+"</span>;<span class="str">""</span><span class="pb">)</span></span>
<div class="abs" style="left:224px;top:454.500px;width:1.200px;height:13px;background:#000"></div>
<svg style="left:45px;top:443px" width="11" height="7"><path d="M0 0H10.500L4.800 6.600Z" fill="#fff"/></svg>
<!-- arrow -->
<svg style="left:0;top:0;filter:drop-shadow(2.500px 2px 2.500px rgba(0,0,0,.5))" width="832" height="705"><path d="M164 251.500L107.700 420" fill="none" stroke="#000" stroke-width="3.700" stroke-linecap="butt"/><path d="M106.100 409.700L106.900 421.600L116.700 413.900" fill="none" stroke="#000" stroke-width="4.200" stroke-linecap="round" stroke-linejoin="miter" stroke-miterlimit="6"/></svg>



</div>
</body>
</html>
